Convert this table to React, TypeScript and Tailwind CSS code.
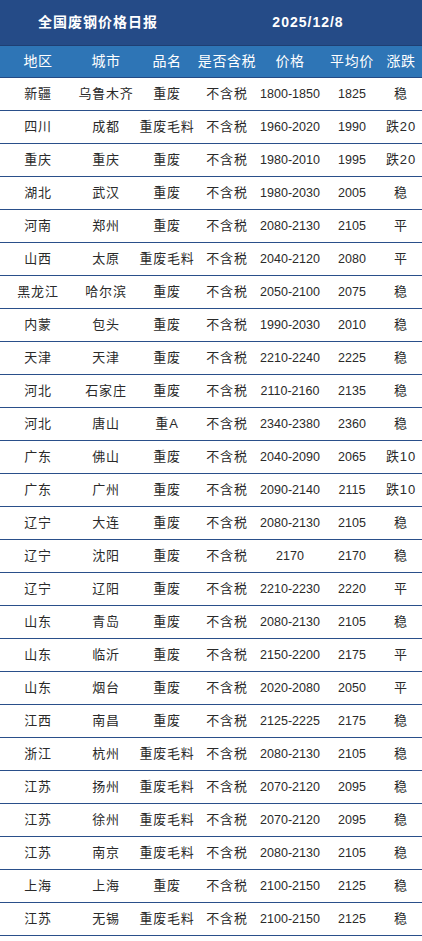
import React from 'react';

const rows: string[][] = [
  ['新疆', '乌鲁木齐', '重废', '不含税', '1800-1850', '1825', '稳'],
  ['四川', '成都', '重废毛料', '不含税', '1960-2020', '1990', '跌20'],
  ['重庆', '重庆', '重废', '不含税', '1980-2010', '1995', '跌20'],
  ['湖北', '武汉', '重废', '不含税', '1980-2030', '2005', '稳'],
  ['河南', '郑州', '重废', '不含税', '2080-2130', '2105', '平'],
  ['山西', '太原', '重废毛料', '不含税', '2040-2120', '2080', '平'],
  ['黑龙江', '哈尔滨', '重废', '不含税', '2050-2100', '2075', '稳'],
  ['内蒙', '包头', '重废', '不含税', '1990-2030', '2010', '稳'],
  ['天津', '天津', '重废', '不含税', '2210-2240', '2225', '稳'],
  ['河北', '石家庄', '重废', '不含税', '2110-2160', '2135', '稳'],
  ['河北', '唐山', '重A', '不含税', '2340-2380', '2360', '稳'],
  ['广东', '佛山', '重废', '不含税', '2040-2090', '2065', '跌10'],
  ['广东', '广州', '重废', '不含税', '2090-2140', '2115', '跌10'],
  ['辽宁', '大连', '重废', '不含税', '2080-2130', '2105', '稳'],
  ['辽宁', '沈阳', '重废', '不含税', '2170', '2170', '稳'],
  ['辽宁', '辽阳', '重废', '不含税', '2210-2230', '2220', '平'],
  ['山东', '青岛', '重废', '不含税', '2080-2130', '2105', '稳'],
  ['山东', '临沂', '重废', '不含税', '2150-2200', '2175', '平'],
  ['山东', '烟台', '重废', '不含税', '2020-2080', '2050', '平'],
  ['江西', '南昌', '重废', '不含税', '2125-2225', '2175', '稳'],
  ['浙江', '杭州', '重废毛料', '不含税', '2080-2130', '2105', '稳'],
  ['江苏', '扬州', '重废毛料', '不含税', '2070-2120', '2095', '稳'],
  ['江苏', '徐州', '重废毛料', '不含税', '2070-2120', '2095', '稳'],
  ['江苏', '南京', '重废毛料', '不含税', '2080-2130', '2105', '稳'],
  ['上海', '上海', '重废', '不含税', '2100-2150', '2125', '稳'],
  ['江苏', '无锡', '重废毛料', '不含税', '2100-2150', '2125', '稳'],
];

const headers = ['地区', '城市', '品名', '是否含税', '价格', '平均价', '涨跌'];

const font = { fontFamily: '"Liberation Sans", "Noto Sans CJK SC", sans-serif' };

export default function App() {
  return (
    <div className="w-[422px] bg-white" style={font}>
      {/* title bar */}
      <div className="h-[46px] bg-[#254b87] border-b border-[#1f3f73] flex items-center text-white font-bold text-[14px] tracking-[1px]">
        <div className="w-[196px] text-center">全国废钢价格日报</div>
        <div className="w-[226px] text-center pr-[2px]">2025/12/8</div>
      </div>

      <div className="grid grid-cols-[76px_60px_62px_58px_68px_56px_42px]">
        {headers.map((h) => (
          <div
            key={h}
            className="h-[32px] bg-[#2e75b6] text-white text-[14px] tracking-[0.6px] flex items-center justify-center border-b border-[#234a85] whitespace-nowrap"
          >
            {h}
          </div>
        ))}
        {rows.map((r, i) =>
          r.map((c, j) => (
            <div
              key={i + '-' + j}
              className={
                'h-[33px] text-[#2a2a2a] flex items-center justify-center border-b border-[#2a4f8a] whitespace-nowrap ' +
                (j === 4 || j === 5 ? 'text-[12.5px] tracking-[0px]' : 'text-[13px] tracking-[0.8px]')
              }
            >
              {c}
            </div>
          ))
        )}
      </div>
    </div>
  );
}
